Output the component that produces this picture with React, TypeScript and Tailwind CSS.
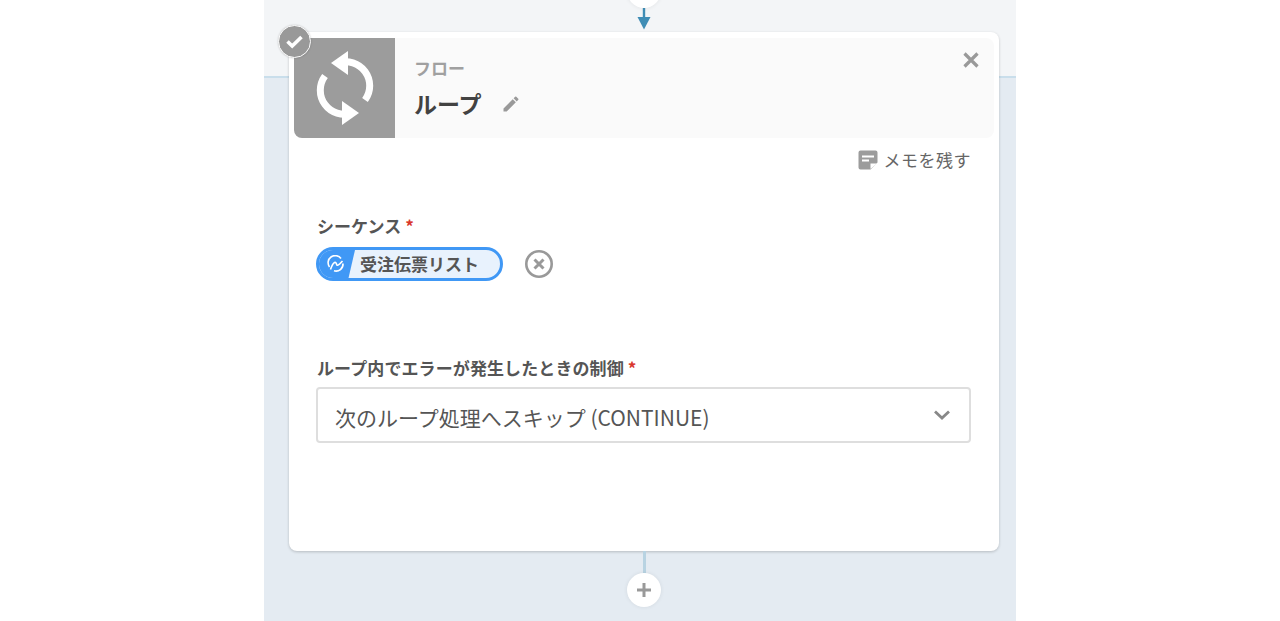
const jp = "font-['Noto_Sans_CJK_JP','Noto_Sans',sans-serif]";

function LoopIcon() {
  return (
    <svg width="58" height="76" viewBox="0 0 58 76" fill="none">
      <path d="M25 13 L22 13 A24 24 0 0 1 49 50" stroke="#fff" strokeWidth="7" />
      <path d="M32 1 L32 25 L15 13 Z" fill="#fff" />
      <path d="M33 63 L36 63 A24 24 0 0 1 9 26" stroke="#fff" strokeWidth="7" />
      <path d="M26 51 L26 75 L43 63 Z" fill="#fff" />
    </svg>
  );
}

function Required() {
  return <span className="ml-1 text-[#d9372c]">*</span>;
}

export default function App() {
  return (
    <div className={`h-[621px] overflow-hidden bg-white ${jp}`}>
      <div className="mx-auto flex h-full w-[752px] flex-col bg-[#e4ebf2]">
        <div className="h-[78px] shrink-0 border-b-2 border-[#c9deeb] bg-[#f3f5f7]" />

        <div className="-mt-[78px] flex flex-col items-center pl-[8px]">
          <div className="relative h-[8px] w-[34px]">
            <div className="absolute -top-[26px] left-0 h-[34px] w-[34px] rounded-full bg-white shadow-[0_0_4px_rgba(0,0,0,0.08)]" />
          </div>
          <svg width="14" height="22" viewBox="0 0 14 22">
            <rect x="5.8" y="0" width="2.4" height="12" fill="#3f8db5" />
            <path d="M0.5 9 H13.5 L7 21.5 Z" fill="#3f8db5" />
          </svg>
        </div>

        <div className="relative mt-[2px] mr-[17px] ml-[25px] h-[519px] shrink-0 rounded-lg bg-white p-[5px] pt-[6px] shadow-[0_1px_3px_rgba(0,0,0,0.2)]">
          <div className="absolute -top-[7px] -left-[11px] flex h-[33px] w-[33px] items-center justify-center rounded-full border border-white bg-[#999] shadow-[0_0_2px_rgba(0,0,0,0.2)]">
            <svg width="19" height="15" viewBox="0 0 19 15" fill="none">
              <path d="M2.5 7.5 L7.2 12 L16.5 3" stroke="#fff" strokeWidth="3.6" />
            </svg>
          </div>

          <div className="flex h-[100px] overflow-hidden rounded-lg bg-[#fafafa]">
            <div className="flex h-[100px] w-[101px] shrink-0 items-center justify-center bg-[#9c9c9c]">
              <LoopIcon />
            </div>
            <div className="flex flex-1 flex-col pl-[19px]">
              <div className="mt-[19px] text-[17px] leading-[22px] font-bold text-[#a0a0a0]">フロー</div>
              <div className="mt-[8px] flex items-center">
                <span className="text-[23px] leading-[32px] font-bold text-[#424242]">ループ</span>
                <svg width="20" height="20" viewBox="0 0 24 24" className="mt-[2px] ml-[19px]" fill="#999">
                  <path d="M3 17.25V21h3.75L17.81 9.94l-3.75-3.75L3 17.25zM20.71 7.04a1 1 0 0 0 0-1.41l-2.34-2.34a1 1 0 0 0-1.41 0l-1.83 1.83 3.75 3.75 1.83-1.83z" />
                </svg>
              </div>
            </div>
            <div className="pt-[13px] pr-[14px]">
              <svg width="18" height="18" viewBox="0 0 18 18" fill="none">
                <path d="M2.5 2.5 L15.5 15.5 M15.5 2.5 L2.5 15.5" stroke="#999" strokeWidth="3.2" />
              </svg>
            </div>
          </div>

          <div className="mt-[10px] flex items-center justify-end pr-[23px] text-[#666]">
            <svg width="20" height="20" viewBox="0 0 20 20" className="mr-[6px]">
              <path d="M2.5 0.5 H17.5 A2 2 0 0 1 19.5 2.5 V12.5 L12.5 19.5 H2.5 A2 2 0 0 1 0.5 17.5 V2.5 A2 2 0 0 1 2.5 0.5 Z" fill="#9c9c9c" />
              <rect x="4" y="5.5" width="12" height="2" fill="#fff" />
              <rect x="4" y="9.5" width="7" height="2" fill="#fff" />
              <path d="M12.5 19 V13.5 H19 Z" fill="#fff" />
            </svg>
            <span className="text-[17px] leading-[24px] tracking-[0.5px]">メモを残す</span>
          </div>

          <div className="mt-[42px] pl-[23px] text-[17px] leading-[24px] font-bold text-[#555]">
            シーケンス<Required />
          </div>
          <div className="mt-[9px] flex items-center pl-[22px]">
            <div className="flex h-[34px] w-[187px] items-center overflow-hidden rounded-full border-[3px] border-[#4098f5] bg-[#e8f2fd]">
              <div className="flex h-full w-[36px] shrink-0 items-center bg-[#4098f5] pl-[8px] [clip-path:polygon(0_0,100%_0,82%_100%,0_100%)]">
                <svg width="18" height="18" viewBox="0 0 18 18" fill="none" stroke="#fff" strokeWidth="1.6">
                  <path d="M2.5 12 A7 7 0 0 1 14 3.5" />
                  <path d="M3.5 14.5 C6 7 8.5 6 9.5 9 C10 11 11 11 15.5 6" />
                  <path d="M7 15.8 A7 7 0 0 0 16 8.5" />
                </svg>
              </div>
              <span className="ml-[5px] text-[17px] leading-[24px] font-bold whitespace-nowrap text-[#555]">受注伝票リスト</span>
            </div>
            <svg width="30" height="30" viewBox="0 0 30 30" fill="none" stroke="#999" className="ml-[21px]">
              <circle cx="15" cy="15" r="12.7" strokeWidth="2.6" />
              <path d="M10.5 10.5 L19.5 19.5 M19.5 10.5 L10.5 19.5" strokeWidth="3" />
            </svg>
          </div>

          <div className="mt-[75px] pl-[23px] text-[17px] leading-[24px] font-bold tracking-[0.1px] text-[#555]">
            ループ内でエラーが発生したときの制御<Required />
          </div>
          <div className="mt-[7px] mr-[23px] ml-[22px] flex h-[56px] items-center justify-between rounded border-2 border-[#dedede] bg-white pr-[18px] pl-[17px]">
            <span className="pt-[5px] text-[21px] text-[#555]">次のループ処理へスキップ (CONTINUE)</span>
            <svg width="18" height="12" viewBox="0 0 18 12" fill="none">
              <path d="M2 2.5 L9 9 L16 2.5" stroke="#888" strokeWidth="2.8" />
            </svg>
          </div>
        </div>

        <div className="relative flex flex-1 justify-center pl-[8px]">
          <div className="h-[22px] w-[3px] bg-[#b8d3e2]" />
          <div className="absolute top-[22px] left-[363px] flex h-[34px] w-[34px] items-center justify-center rounded-full bg-white shadow-[0_0_4px_rgba(0,0,0,0.08)]">
            <svg width="16" height="16" viewBox="0 0 16 16">
              <path d="M6.5 1 H9.5 V6.5 H15 V9.5 H9.5 V15 H6.5 V9.5 H1 V6.5 H6.5 Z" fill="#999" />
            </svg>
          </div>
        </div>
      </div>
    </div>
  );
}
